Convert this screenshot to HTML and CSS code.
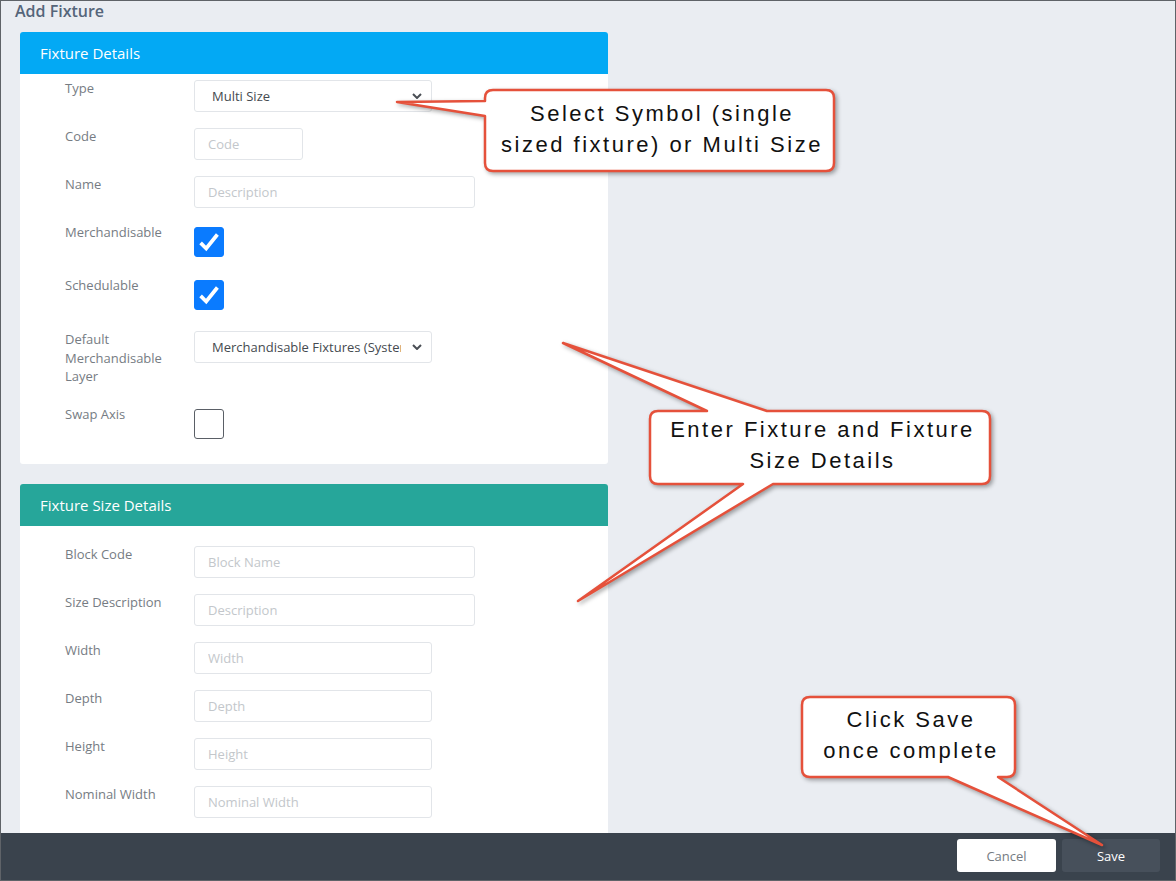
FILE: index.html
```html
<!doctype html>
<html lang="en">
<head>
    <meta charset="UTF-8">
    <title>Add Fixture</title>
    <link rel="stylesheet" href="styles.css">
</head>
<body>
<div class="frame">
    <div class="content">
        <h1 class="title">Add Fixture</h1>

        <div class="card">
            <div class="card-head blue">Fixture Details</div>
            <div class="card-body first">
                <div class="row">
                    <label>Type</label>
                    <div class="select w238">
                        <select><option>Multi Size</option><option>Symbol</option></select>
                        <svg class="chev" width="10" height="6" viewBox="0 0 10 6"><polyline points="1,1 5,5 9,1"/></svg>
                    </div>
                </div>
                <div class="row">
                    <label>Code</label>
                    <input class="w109" placeholder="Code">
                </div>
                <div class="row">
                    <label>Name</label>
                    <input class="w281" placeholder="Description">
                </div>
                <div class="row">
                    <label>Merchandisable</label>
                    <span class="check on"><svg viewBox="0 0 30 30"><polyline points="6,16 12,22 24,7"/></svg></span>
                </div>
                <div class="row">
                    <label>Schedulable</label>
                    <span class="check on"><svg viewBox="0 0 30 30"><polyline points="6,16 12,22 24,7"/></svg></span>
                </div>
                <div class="row tall">
                    <label>Default<br>Merchandisable<br>Layer</label>
                    <div class="select w238 low">
                        <select><option>Merchandisable Fixtures (System)</option></select>
                        <svg class="chev" width="10" height="6" viewBox="0 0 10 6"><polyline points="1,1 5,5 9,1"/></svg>
                    </div>
                </div>
                <div class="row">
                    <label>Swap Axis</label>
                    <span class="check"></span>
                </div>
            </div>
        </div>

        <div class="card">
            <div class="card-head green">Fixture Size Details</div>
            <div class="card-body">
                <div class="row">
                    <label>Block Code</label>
                    <input class="w281" placeholder="Block Name">
                </div>
                <div class="row">
                    <label>Size Description</label>
                    <input class="w281" placeholder="Description">
                </div>
                <div class="row">
                    <label>Width</label>
                    <input class="w238" placeholder="Width">
                </div>
                <div class="row">
                    <label>Depth</label>
                    <input class="w238" placeholder="Depth">
                </div>
                <div class="row">
                    <label>Height</label>
                    <input class="w238" placeholder="Height">
                </div>
                <div class="row">
                    <label>Nominal Width</label>
                    <input class="w238" placeholder="Nominal Width">
                </div>
            </div>
        </div>
    </div>

    <div class="footer">
        <button class="btn cancel">Cancel</button>
        <button class="btn save">Save</button>
    </div>

    <!-- help callouts drawn over the form -->
    <svg class="callouts" width="1176" height="881" viewBox="0 0 1176 881">
        <path d="M493,90 H826 Q834,90 834,98 V163 Q834,171 826,171 H493 Q485,171 485,163 V116 L397,102 L485,101 V98 Q485,90 493,90 Z"/>
        <path d="M658,411 H707 L563,343 L767,411 H982 Q990,411 990,419 V476 Q990,484 982,484 H773 L578,601 L743,484 H658 Q650,484 650,476 V419 Q650,411 658,411 Z"/>
        <path d="M810,697 H1007 Q1015,697 1015,705 V769 Q1015,777 1007,777 H998 L1102,845 L948,777 H810 Q802,777 802,769 V705 Q802,697 810,697 Z"/>
    </svg>
    <div class="note note-type">Select Symbol (single<br>sized fixture) or Multi Size</div>
    <div class="note note-details">Enter Fixture and Fixture<br>Size Details</div>
    <div class="note note-save">Click Save<br>once complete</div>
</div>
</body>
</html>
```

FILE: styles.css
```css
* {
    box-sizing: border-box;
}
body {
    margin: 0;
    font-family: "Open Sans", "Liberation Sans", sans-serif;
}
.frame {
    position: relative;
    width: 1176px;
    height: 881px;
    border: 1px solid #5f6368;
    background: #eaedf2;
    display: flex;
    flex-direction: column;
    overflow: hidden;
}
.content {
    flex: 1;
    overflow: hidden;
    padding: 0 0 0 19px;
}
.title {
    margin: 0 0 11px -5px;
    padding-top: 1px;
    font-size: 16px;
    line-height: 19px;
    font-weight: 600;
    color: #55657a;
}
.card {
    width: 588px;
    background: white;
    border-radius: 3px;
    margin-bottom: 20px;
    overflow: hidden;
}
.card-head {
    height: 42px;
    line-height: 43px;
    padding-left: 20px;
    color: white;
    font-size: 15px;
}
.card-head.blue {
    background: #03a9f4;
}
.card-head.green {
    background: #26a69a;
}
.card-body {
    padding: 20px 0 21px 45px;
}
.card-body.first {
    padding-top: 6px;
}
.row {
    display: flex;
    align-items: flex-start;
    margin-bottom: 16px;
}
.row:last-child {
    margin-bottom: 0;
}
.row.tall {
    margin-bottom: 20px;
}
.row label {
    width: 129px;
    flex: none;
    font-size: 13px;
    line-height: 17.5px;
    color: #767c83;
}
.row.tall label {
    line-height: 18.5px;
}
input, select {
    height: 32px;
    border: 1px solid #e2e5e9;
    border-radius: 3px;
    font-family: "Open Sans", "Liberation Sans", sans-serif;
    font-size: 13px;
    color: #454a50;
    background: white;
    outline: none;
}
input {
    padding: 0 13px;
}
input::placeholder {
    color: #c3c7cb;
}
.w109 { width: 109px; }
.w238 { width: 238px; }
.w281 { width: 281px; }
.select {
    position: relative;
    height: 32px;
}
.select.low {
    margin-top: 1px;
}
.select select {
    width: 100%;
    appearance: none;
    -webkit-appearance: none;
    padding: 0 30px 0 17px;
}
.chev {
    position: absolute;
    right: 10px;
    top: 13px;
    fill: none;
    stroke: #4a4f55;
    stroke-width: 2;
}
.check {
    display: block;
    width: 30px;
    height: 30px;
    margin: 3px 0 4px;
    border: 1px solid #5a5f66;
    border-radius: 3px;
    background: white;
}
.check.on {
    background: #0a7bff;
    border-color: #0a7bff;
}
.check svg {
    display: block;
    width: 28px;
    height: 28px;
    fill: none;
    stroke: white;
    stroke-width: 4;
}
.footer {
    height: 47px;
    flex: none;
    background: #3a434d;
    display: flex;
    justify-content: flex-end;
    align-items: flex-start;
    gap: 6px;
    padding: 6px 15px 0 0;
}
.btn {
    height: 33px;
    border: 0;
    border-radius: 3px;
    font-family: "Open Sans", "Liberation Sans", sans-serif;
    font-size: 13px;
}
.cancel {
    width: 99px;
    background: white;
    color: #757b82;
}
.save {
    width: 98px;
    background: #47505b;
    color: white;
}
.callouts {
    position: absolute;
    top: -1px;
    left: -1px;
    pointer-events: none;
    filter: drop-shadow(2px 2px 2px rgba(0, 0, 0, 0.35));
}
.callouts path {
    fill: white;
    stroke: #e5513b;
    stroke-width: 2.5;
    stroke-linejoin: round;
}
.note {
    position: absolute;
    font-family: "Liberation Sans", Arial, sans-serif;
    font-size: 22px;
    letter-spacing: 2.5px;
    line-height: 31px;
    color: #111;
    text-align: center;
}
.note-type {
    left: 486px;
    top: 97px;
    width: 350px;
}
.note-details {
    left: 651px;
    top: 413px;
    width: 341px;
}
.note-save {
    left: 803px;
    top: 703px;
    width: 214px;
}
```
